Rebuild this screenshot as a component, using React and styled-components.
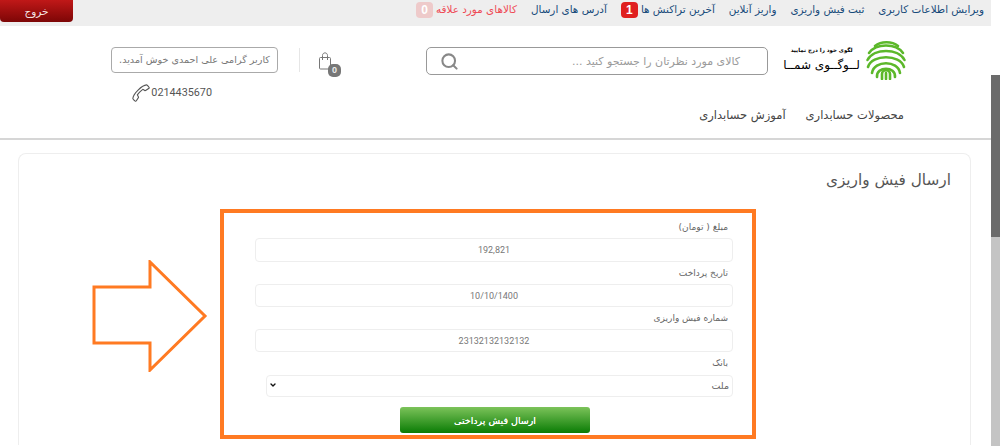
import React from 'react'
import styled, { createGlobalStyle } from 'styled-components'
import { ChevronDown, Search } from 'lucide-react'
import { SlPhone } from 'react-icons/sl'

const GlobalStyle = createGlobalStyle`
  html, body { margin: 0; padding: 0; height: 100%; overflow: hidden; background: #fff; }
  body { font-family: "DejaVu Sans", "Liberation Sans", sans-serif; }
  * { box-sizing: border-box; }
`

const Shell = styled.div`
  display: flex;
  height: 446px;
  overflow: hidden;
`
const Main = styled.div`
  width: 991px;
  direction: rtl;
`
const Scrollbar = styled.div`
  width: 9px;
  display: flex;
  flex-direction: column;
  background: #c4c4c4;
`
const ScrollTop = styled.div`
  height: 75px;
  background: #fff;
`
const ScrollThumb = styled.div`
  height: 162px;
  background: #6b6b6b;
`
const TopBar = styled.div`
  height: 26px;
  background: #eeeeee;
  display: flex;
  align-items: flex-start;
  gap: 14px;
  padding-right: 7px;
`
const TopLink = styled.a`
  font-size: 10.4px;
  line-height: 19px;
  color: ${p => (p.$fav ? '#ee4a55' : '#164a7a')};
  display: flex;
  align-items: center;
  gap: 3px;
  white-space: nowrap;
`
const Badge = styled.span`
  width: 17px;
  height: 16px;
  margin-top: 1px;
  border-radius: 4px;
  background: ${p => (p.$faded ? '#eecaca' : '#e02020')};
  color: #fff;
  font: bold 12px/16px "Liberation Sans", sans-serif;
  text-align: center;
`
const Logout = styled.button`
  margin-right: auto;
  width: 73px;
  height: 22px;
  border: 0;
  border-radius: 0 0 4px 4px;
  background: linear-gradient(#c01818, #7d0606);
  color: #f4e4e4;
  font: 10.5px "DejaVu Sans", sans-serif;
  padding: 0;
`
const Header = styled.header`
  height: 114px;
  border-bottom: 2px solid #d6d6d6;
  display: flex;
  flex-direction: column;
`
const HeaderRow = styled.div`
  height: 70px;
  display: flex;
  align-items: flex-start;
  padding-right: 85px;
`
const Logo = styled.div`
  width: 118px;
  flex: none;
  margin-top: 14px;
  display: flex;
  align-items: center;
  gap: 6px;
  svg { flex: none; }
`
const LogoText = styled.div`
  display: flex;
  flex-direction: column;
  align-items: center;
  color: #000;
  white-space: nowrap;
`
const LogoSmall = styled.span`
  font-size: 5.5px;
  font-weight: bold;
  line-height: 10px;
`
const LogoBig = styled.span`
  font-size: 12px;
  line-height: 20px;
`
const SearchBox = styled.div`
  width: 342px;
  height: 28px;
  margin: 21px 20px 0 0;
  border: 1px solid #999;
  border-radius: 5px;
  display: flex;
  align-items: center;
  justify-content: space-between;
  padding: 0 27px 0 13px;
  color: #9a9a9a;
  font-size: 11px;
`
const Cart = styled.div`
  position: relative;
  direction: ltr;
  display: flex;
  align-items: flex-start;
  width: 22px;
  height: 26px;
  margin: 26px 85px 0 0;
`
const CartCount = styled.span`
  position: absolute;
  right: 0;
  bottom: 1px;
  width: 13px;
  height: 13px;
  border-radius: 5px;
  background: #777;
  color: #eee;
  font: bold 9px/13px "Liberation Sans", sans-serif;
  text-align: center;
`
const Divider = styled.div`
  width: 1px;
  height: 24px;
  margin: 22px 19px 0 0;
  background: #e6e6e6;
`
const Account = styled.div`
  margin: 21px 21px 0 0;
  width: 167px;
  display: flex;
  flex-direction: column;
  align-items: flex-start;
`
const Welcome = styled.div`
  width: 167px;
  height: 26px;
  border: 1px solid #aaa;
  border-radius: 4px;
  font-size: 9.6px;
  line-height: 23px;
  color: #777;
  text-align: center;
  white-space: nowrap;
`
const Phone = styled.div`
  direction: ltr;
  margin: 10px 66px 0 0;
  display: flex;
  align-items: center;
  gap: 1px;
  font: 10.8px/20px Roboto, sans-serif;
  color: #555;
`
const Nav = styled.nav`
  display: flex;
  gap: 20px;
  padding: 10px 87px 0 0;
`
const NavLink = styled.a`
  font-size: 11.5px;
  line-height: 18px;
  color: #444;
  white-space: nowrap;
`
const Card = styled.section`
  position: relative;
  height: 292px;
  margin: 13px 20px 0 18px;
  border: 1px solid #eee;
  border-bottom: 0;
  border-radius: 8px 8px 0 0;
  padding: 0 19px 0 0;
`
const Title = styled.h1`
  margin: 0;
  height: 55px;
  padding-top: 14px;
  font-size: 15.3px;
  line-height: 24px;
  font-weight: normal;
  color: #555;
`
const ArrowMark = styled.svg`
  position: absolute;
  left: 73px;
  top: 106px;
`
const Form = styled.form`
  width: 536px;
  height: 230px;
  margin-right: 195px;
  border: 4px solid #ff7a22;
  padding: 3px 19px 0 31px;
  display: flex;
  flex-direction: column;
`
const Label = styled.label`
  height: 22px;
  padding: 3px 5px 0 0;
  font-size: 9px;
  line-height: 16px;
  color: #666;
`
const Input = styled.input`
  width: 100%;
  height: 23px;
  flex: none;
  border: 1px solid #eee;
  border-radius: 4px;
  background: #fff;
  text-align: center;
  font: 9px Roboto, sans-serif;
  color: #777;
  outline: none;
  padding: 0;
  &:first-of-type { height: 24px; }
`
const SelectWrap = styled.div`
  position: relative;
  width: 467px;
  height: 22px;
  flex: none;
  svg {
    position: absolute;
    left: 3px;
    top: 7px;
    pointer-events: none;
  }
`
const Select = styled.select`
  width: 100%;
  height: 100%;
  appearance: none;
  border: 1px solid #eee;
  border-radius: 4px;
  background: #fff;
  font: 9.5px "DejaVu Sans", sans-serif;
  color: #666;
  padding: 0 3px;
`
const Submit = styled.button`
  align-self: center;
  flex: none;
  width: 190px;
  height: 26px;
  margin: 11px 0 0 2px;
  border: 0;
  border-radius: 3px;
  background: linear-gradient(#7cc35a, #0a7c05);
  color: #fff;
  font: 9.5px "DejaVu Sans", sans-serif;
  text-shadow: 0 0 0.6px #fff;
  padding: 0;
`

const Fingerprint = () => (
  <svg width="40" height="40" viewBox="0 0 40 40" fill="none" stroke="#5cb82a" strokeWidth="2.6" strokeLinecap="round">
    <path d="M9 6C15 1 26 1 32 6" />
    <path d="M3 13C10 3 30 3 37 13" />
    <path d="M1.5 20C8 8 32 8 38.5 20" />
    <path d="M2 27C6 14 34 14 38 27" />
    <path d="M6 33C8 20 32 20 34 33" />
    <path d="M11 37C10 26 30 26 29 37" />
    <path d="M16 39V34C16 29 24 29 24 34V39" />
    <path d="M20 33V39" />
  </svg>
)

const BagIcon = () => (
  <svg width="13" height="18" viewBox="0 0 13 18" fill="none" stroke="#777" strokeWidth="1">
    <rect x="0.5" y="5.5" width="11" height="11.5" rx="1" />
    <path d="M3.5 8V3.5C3.5 0 8.5 0 8.5 3.5V8" />
  </svg>
)

const fields = [
  { label: 'مبلغ ( تومان)', value: '192,821' },
  { label: 'تاریخ پرداخت', value: '10/10/1400' },
  { label: 'شماره فیش واریزی', value: '23132132132132' },
]

const App = () => {
  return (
    <Shell>
      <GlobalStyle />
      <Main>
        <TopBar>
          <TopLink>ویرایش اطلاعات کاربری</TopLink>
          <TopLink>ثبت فیش واریزی</TopLink>
          <TopLink>واریز آنلاین</TopLink>
          <TopLink>آخرین تراکنش ها <Badge>1</Badge></TopLink>
          <TopLink>آدرس های ارسال</TopLink>
          <TopLink $fav>کالاهای مورد علاقه <Badge $faded>0</Badge></TopLink>
          <Logout>خروج</Logout>
        </TopBar>
        <Header>
          <HeaderRow>
            <Logo>
              <Fingerprint />
              <LogoText>
                <LogoSmall>لگوی خود را درج نمایید</LogoSmall>
                <LogoBig>لــوگــوی شمــا</LogoBig>
              </LogoText>
            </Logo>
            <SearchBox>
              <span>کالای مورد نظرتان را جستجو کنید ...</span>
              <Search size={19} color="#888" strokeWidth={2.6} />
            </SearchBox>
            <Cart>
              <BagIcon />
              <CartCount>0</CartCount>
            </Cart>
            <Divider />
            <Account>
              <Welcome>کاربر گرامی علی احمدی خوش آمدید.</Welcome>
              <Phone>
                <SlPhone size={18} color="#555" style={{ transform: 'scaleY(-1)' }} />
                0214435670
              </Phone>
            </Account>
          </HeaderRow>
          <Nav>
            <NavLink>محصولات حسابداری</NavLink>
            <NavLink>آموزش حسابداری</NavLink>
          </Nav>
        </Header>
        <Card>
          <Title>ارسال فیش واریزی</Title>
          <Form>
            {fields.map(f => (
              <React.Fragment key={f.label}>
                <Label>{f.label}</Label>
                <Input readOnly value={f.value} />
              </React.Fragment>
            ))}
            <Label>بانک</Label>
            <SelectWrap>
              <Select defaultValue="mellat">
                <option value="mellat">ملت</option>
              </Select>
              <ChevronDown size={8} color="#111" strokeWidth={4} />
            </SelectWrap>
            <Submit type="button">ارسال فیش پرداختی</Submit>
          </Form>
          <ArrowMark width="116" height="112" viewBox="0 0 116 112" fill="#fff" stroke="#ff7a22" strokeWidth="3">
            <polygon points="2,27 58,27 58,2 113,56 58,110 58,83 2,83" />
          </ArrowMark>
        </Card>
      </Main>
      <Scrollbar>
        <ScrollTop />
        <ScrollThumb />
      </Scrollbar>
    </Shell>
  )
}

export default App
